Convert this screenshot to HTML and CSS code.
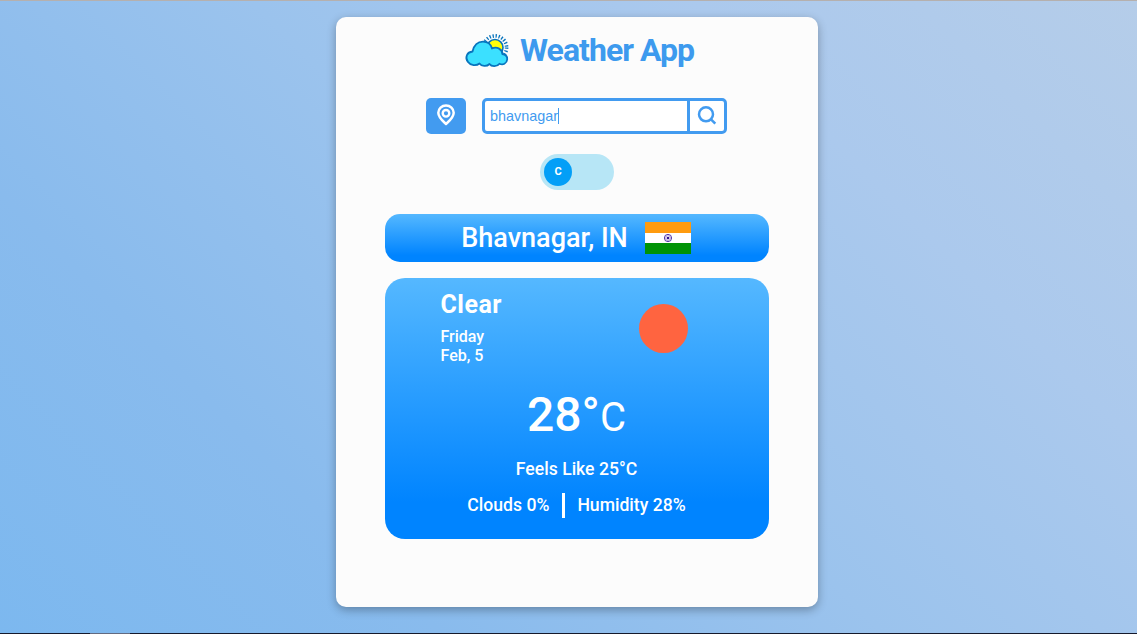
FILE: index.html
```
<!DOCTYPE html>
<html lang="en">
<head>
<meta charset="utf-8">
<title>Weather App</title>
<link rel="stylesheet" href="styles.css">
</head>
<body>
<main class="app">
  <header class="brand">
    <svg class="logo" width="44" height="34" viewBox="0 0 44 34">
      <g stroke="#0874bd" stroke-width="1.3">
        <circle cx="30" cy="13.5" r="11.6" fill="none" stroke-width="3.6" stroke-dasharray="1.3 1.75"/>
        <circle cx="30" cy="13.5" r="8" fill="#ffff08" stroke-width="1.6"/>
      </g>
      <path d="M7.500 17.500C9 11 13 7.600 18 7.600C23 7.600 26 10.500 27 14.500C32 12.300 37.500 15.200 37.300 20C41 20.700 42.500 23 42.200 25.500C41.800 29.500 37.800 31.500 34.500 29.700C32 33 26.500 33 24.500 30C21.500 33 16.500 32.300 14.500 29.500C11.500 32 5.500 31.700 3 28C-.500 23.500 2 18 7.500 17.500Z" fill="#3be0ff" stroke="#0874bd" stroke-width="1.8" stroke-linejoin="round"/>
    </svg>
    <h1 class="title">Weather App</h1>
  </header>
  <div class="controls">
    <button class="locate" aria-label="Use my location">
      <svg width="20" height="22" viewBox="0 0 20 22" fill="none" stroke="#fff" stroke-width="2.5">
        <path d="M10 20C7.500 17.600 2.300 13.500 2.300 8.700A7.700 7.200 0 0 1 17.700 8.700C17.700 13.500 12.500 17.600 10 20Z" stroke-linejoin="round"/>
        <circle cx="10" cy="9.300" r="3.300" stroke-width="2.400"/>
      </svg>
    </button>
    <div class="search">
      <div class="query">bhavnagar<span class="caret"></span></div>
      <button class="go" aria-label="Search">
        <svg width="20" height="20" viewBox="0 0 20 20" fill="none" stroke="#429bf0" stroke-width="2.5">
          <circle cx="9" cy="9.300" r="7"/><path d="M14 14.300L18.300 18.600"/>
        </svg>
      </button>
    </div>
  </div>
  <div class="toggle"><span class="knob">C</span></div>
  <section class="place">
    <span class="city">Bhavnagar, IN</span>
    <svg class="flag" width="46" height="32" viewBox="0 0 46 32">
      <path fill="#ff9b0f" d="M0 0h46v11H0z"/><path fill="#fff" d="M0 11h46v10H0z"/><path fill="#009306" d="M0 21h46v11H0z"/>
      <g fill="none" stroke="#3c1c9c"><circle cx="23" cy="16" r="3.600" stroke-width=".9"/><circle cx="23" cy="16" r="2.300" stroke-width=".7" stroke-dasharray=".6 .6"/></g>
      <circle cx="23" cy="16" r="1.300" fill="#32108f"/>
    </svg>
  </section>
  <section class="weather">
    <div class="summary">
      <div>
        <h2 class="condition">Clear</h2>
        <p class="date">Friday<br>Feb, 5</p>
      </div>
      <div class="sun"></div>
    </div>
    <div class="temp">28°<span class="unit">C</span></div>
    <div class="feels">Feels Like 25°C</div>
    <div class="details"><span>Clouds 0%</span><span class="divider"></span><span>Humidity 28%</span></div>
  </section>
</main>
<footer class="edge"><span class="edge-mark"></span></footer>
</body>
</html>
```
FILE: styles.css
```
* { box-sizing: border-box; }
body {
  margin: 0;
  height: 634px;
  overflow: hidden;
  display: flex;
  flex-direction: column;
  align-items: center;
  justify-content: space-between;
  border-top: 1px solid #b5b0ae;
  background: linear-gradient(45deg, #7cb8ef 0%, #89bbed 25%, #9bc3ed 50%, #abc9ed 75%, #b5cde9 100%);
  font-family: Roboto, sans-serif;
  color: #fff;
}
h1, h2, p { margin: 0; }
button { padding: 0; border: 0; font: inherit; }
.app {
  width: 482px;
  height: 590px;
  margin: 16px 0 0 17px;
  display: flex;
  flex-direction: column;
  align-items: center;
  background: #fcfcfc;
  border-radius: 10px;
  box-shadow: 0 3px 10px rgba(0, 0, 0, .3);
}
.brand { display: flex; gap: 11px; width: 352px; height: 36px; margin: 16px 0 0 112px; align-items: center; padding-left: 8px; }
.logo { display: block; flex: none; overflow: visible; }
.title { padding-bottom: 2px; font-size: 32px; line-height: 36px; font-weight: 700; letter-spacing: -.95px; color: #3d9aee; white-space: nowrap; }
.controls { display: flex; gap: 16px; margin: 29px 1px 0 0; }
.locate {
  width: 40px;
  height: 36px;
  border-radius: 5px;
  background: #429bf0;
  display: grid;
  place-items: center;
}
.locate svg, .go svg { display: block; margin-bottom: 2px; }
.search {
  width: 245px;
  height: 36px;
  display: flex;
  border: 3px solid #429bf0;
  border-radius: 5px;
  background: #fff;
}
.query {
  flex: 1;
  display: flex;
  align-items: center;
  padding: 0 0 1px 5px;
  font: 14.4px "Liberation Sans", Arial, sans-serif;
  color: #429bf0;
}
.caret { width: 1px; height: 16px; background: #429bf0; }
.go {
  width: 37px;
  border-left: 3px solid #429bf0;
  background: transparent;
  display: grid;
  place-items: center;
}
.toggle {
  width: 74px;
  height: 36px;
  margin-top: 20px;
  padding: 4px;
  border-radius: 18px;
  background: #b7e6f6;
}
.knob {
  width: 28px;
  height: 28px;
  padding-bottom: 2px;
  border-radius: 50%;
  background: #039ff7;
  display: grid;
  place-items: center;
  font-size: 11px;
  font-weight: 700;
}
.place, .weather { width: 384px; background: linear-gradient(#55b8ff, #0084ff 86%); }
.place {
  height: 48px;
  margin-top: 24px;
  padding-right: 2px;
  border-radius: 15px;
  display: flex;
  justify-content: center;
  align-items: center;
  gap: 17px;
}
.city { font-size: 27px; line-height: 48px; font-weight: 500; }
.weather { height: 261px; margin-top: 16px; border-radius: 20px; display: flex; flex-direction: column; align-items: center; }
.summary { width: 247px; display: flex; justify-content: space-between; margin: 12px 26px 0 0; }
.condition { font-size: 25px; line-height: 30px; font-weight: 700; letter-spacing: .5px; }
.date { margin-top: 7px; font-size: 16px; line-height: 19px; font-weight: 500; }
.sun { width: 49px; height: 49px; margin-top: 14px; border-radius: 50%; background: #ff6440; }
.temp { margin: 22px 1px 0 0; font-size: 48px; line-height: 56px; font-weight: 500; }
.unit { font-size: 40px; font-weight: 400; }
.feels { margin: 13px 1px 0 0; font-size: 17.6px; line-height: 21px; font-weight: 500; }
.details { display: flex; align-items: center; margin: 12px 1px 0 0; font-size: 17.6px; line-height: 24px; font-weight: 500; }
.divider { width: 3px; height: 25px; margin: 1px 12px 0 13px; background: #fff; }
.edge { width: 100%; height: 1px; background: #15192b; }
.edge-mark { display: block; width: 40px; height: 1px; margin-left: 90px; background: #626a80; }
```
